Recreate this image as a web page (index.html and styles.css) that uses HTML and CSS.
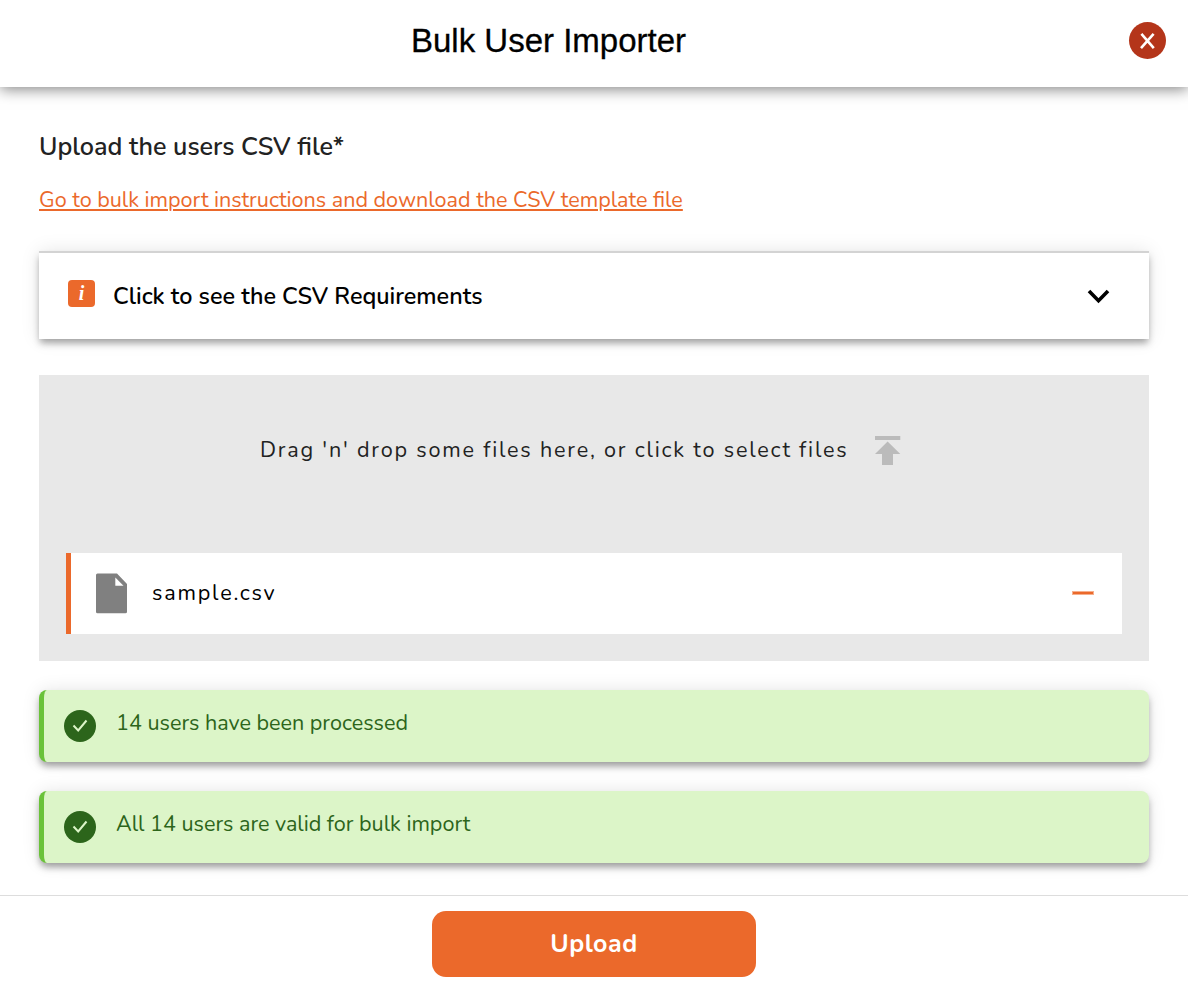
FILE: index.html
```html
<!DOCTYPE html>
<html lang="en">
<head>
<meta charset="utf-8">
<title>Bulk User Importer</title>
<link rel="stylesheet" href="styles.css">
</head>
<body>
<div class="dialog">
  <header class="header">
    <h1 class="title">Bulk User Importer</h1>
    <button class="close" aria-label="Close">
      <svg width="38" height="38" viewBox="0 0 38 38"><circle cx="19.500" cy="19.500" r="18.500" fill="#b4351a"/><path d="M13.400 12.900l12.400 14.200M25.600 12.900L13 27.100" fill="none" stroke="#fff" stroke-width="2.600"/></svg>
    </button>
  </header>
  <main class="content">
    <h2 class="label">Upload the users CSV file*</h2>
    <a class="link" href="#">Go to bulk import instructions and download the CSV template file</a>
    <section class="accordion">
      <span class="info">i</span>
      <span class="accordion-title">Click to see the CSV Requirements</span>
      <svg class="chevron" width="24" height="16" viewBox="0 0 24 16"><path d="M3 3l9.500 9.700L22 3" fill="none" stroke="#000" stroke-width="3.600"/></svg>
    </section>
    <section class="dropzone">
      <div class="prompt">
        <span>Drag 'n' drop some files here, or click to select files</span>
        <svg width="26" height="30" viewBox="0 0 26 30" fill="#bbb"><path d="M0 0h25.300v4H0zM12.600 5.600L25.300 18H18v11H7V18H0z"/></svg>
      </div>
      <div class="file">
        <svg width="32" height="41" viewBox="0 0 32 41"><path d="M1.500.500H21L31 11v27.800a1.500 1.500 0 0 1-1.500 1.500h-28A1.500 1.500 0 0 1 0 38.800V2A1.500 1.500 0 0 1 1.500.500z" fill="#808080"/><path d="M19.300 4.500v8.200h8.200z" fill="#fff"/></svg>
        <span class="file-name">sample.csv</span>
        <i class="remove"></i>
      </div>
    </section>
    <div class="notice">
      <svg width="32" height="32" viewBox="0 0 32 32"><circle cx="16" cy="16" r="16" fill="#2c651b"/><path d="M9.500 15.500l4.700 5L22.500 10.500" fill="none" stroke="#dcf5c8" stroke-width="2"/></svg>
      <span>14 users have been processed</span>
    </div>
    <div class="notice">
      <svg width="32" height="32" viewBox="0 0 32 32"><circle cx="16" cy="16" r="16" fill="#2c651b"/><path d="M9.500 15.500l4.700 5L22.500 10.500" fill="none" stroke="#dcf5c8" stroke-width="2"/></svg>
      <span>All 14 users are valid for bulk import</span>
    </div>
  </main>
  <footer class="footer"><button class="upload">Upload</button></footer>
</div>
</body>
</html>
```
FILE: styles.css
```css
* { box-sizing: border-box; }
body { margin: 0; background: #fff; font-family: Nunito, Lato, sans-serif; color: #000; }
button { border: 0; padding: 0; background: none; font-family: inherit; }
.dialog { display: flex; flex-direction: column; height: 990px; overflow: hidden; }
.header { display: flex; align-items: center; height: 87px; padding: 0 22px 7px 0; flex: none; box-shadow: 0 2px 14px rgba(0,0,0,.5); }
.title { flex: 1; margin: 0; padding: 1px 0 0 411px; font: 400 33px/40px "Liberation Sans", sans-serif; -webkit-text-stroke: .3px #000; }
.close { display: flex; }
.content { flex: 1; padding: 43px 39px 0; }
.label { margin: 0; font-size: 25.15px; line-height: 34px; font-weight: 600; color: #222; }
.link { display: block; margin-top: 19px; font-size: 21.57px; line-height: 34px; color: #eb692b; text-decoration: underline; text-decoration-thickness: 2px; text-underline-offset: 2px; }
.accordion { display: flex; align-items: center; margin-top: 34px; height: 88px; padding: 0 39px 0 29px; border-top: 2px solid #d3d3d3; box-shadow: 0 5px 7px -1px rgba(0,0,0,.34), 0 0 18px rgba(0,0,0,.1); }
.info { width: 27px; height: 27px; margin: 0 18px 6px 0; border-radius: 4px; background: #eb692b; color: #fff; text-align: center; font: italic 700 20px/27px "Liberation Serif", serif; }
.accordion-title { font-size: 23.38px; font-weight: 600; }
.chevron { margin-left: auto; }
.dropzone { margin-top: 36px; height: 286px; padding: 61px 27px 27px; background: #e8e8e8; }
.prompt { display: flex; align-items: center; height: 30px; padding-left: 194px; font-size: 21.6px; letter-spacing: 1.8px; color: #222; }
.prompt span { position: relative; top: -1px; }
.prompt svg { margin-left: 27px; }
.file { display: flex; align-items: center; height: 81px; margin-top: 87px; padding: 0 28px 0 25px; border-left: 5px solid #eb692b; background: #fff; }
.file-name { margin: 0 0 2px 24px; font-size: 21.6px; letter-spacing: 1.8px; }
.remove { margin: 0 0 2px auto; width: 22px; height: 4px; background: #eb692b; border: 1px solid #f6b08d; }
.notice { display: flex; height: 72px; margin-top: 29px; padding: 20px 20px 0; border-left: 5px solid #6ac239; border-radius: 8px; background: #dcf5c8; color: #2c651b; font-size: 21.57px; line-height: 26px; box-shadow: 0 5px 7px -1px rgba(0,0,0,.36), 0 0 18px rgba(0,0,0,.1); }
.notice span { margin-left: 20px; }
.footer { height: 95px; flex: none; border-top: 1px solid #ddd; display: flex; justify-content: center; padding-top: 15px; }
.upload { width: 324px; height: 66px; border-radius: 14px; background: #eb692b; color: #fff; font-size: 25px; font-weight: 700; letter-spacing: .55px; }
```
